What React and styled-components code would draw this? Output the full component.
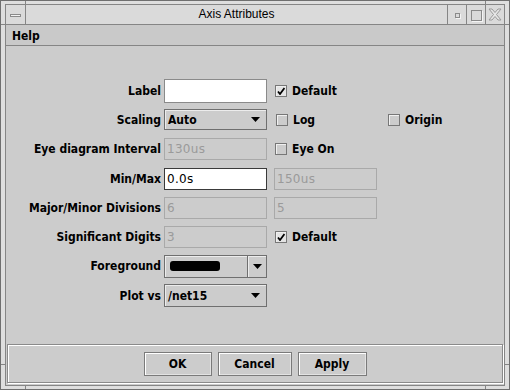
import React from 'react'
import styled, { createGlobalStyle } from 'styled-components'

const GlobalStyle = createGlobalStyle`
  html, body {
    margin: 0;
    padding: 0;
    background: #cccccc;
  }
  body {
    font-family: "DejaVu Sans Condensed", "DejaVu Sans", sans-serif;
  }
`

const Window = styled.div`
  position: relative;
  box-sizing: border-box;
  width: 510px;
  height: 390px;
  padding: 3px 4px;
  display: flex;
  background: #dedede;
  border: 1px solid #6f6f6f;
`

const Tick = styled.div`
  position: absolute;
  left: ${p => p.$x}px;
  top: ${p => p.$y}px;
  width: ${p => p.$w}px;
  height: ${p => p.$h}px;
  background: #858585;
`

const Frame = styled.div`
  flex: 1;
  min-width: 0;
  display: flex;
  flex-direction: column;
  border: 1px solid #858585;
  background: #cccccc;
`

const TitleBar = styled.div`
  display: flex;
  height: 19px;
  background: #dadada;
  border-bottom: 1px solid #858585;
`

const TitleButton = styled.div`
  flex: none;
  width: ${p => (p.$left ? 19 : 18)}px;
  display: flex;
  align-items: center;
  justify-content: center;
  border-left: ${p => (p.$left ? 'none' : '1px solid #858585')};
  border-right: ${p => (p.$left ? '1px solid #858585' : 'none')};
`

const Title = styled.div`
  flex: 1;
  text-align: center;
  font: 12px/19px "Liberation Sans", Arial, sans-serif;
  color: #000;
`

const MinBar = styled.div`
  width: 9px;
  height: 1px;
  margin-top: 1px;
  background: #f2f2f2;
  border: 1px solid #8a8a8a;
`

const IconSquare = styled.div`
  box-sizing: border-box;
  width: ${p => p.$size}px;
  height: ${p => p.$size}px;
  margin-top: 1px;
  border: 1px solid #8a8a8a;
  box-shadow: 1px 1px 0 #f4f4f4;
`

const MenuBar = styled.div`
  height: 20px;
  padding-left: 6px;
  background: #c9c9c9;
  border-bottom: 1px solid #858585;
  font-size: 12px;
  font-weight: bold;
  line-height: 22px;
  color: #000;
`

const Form = styled.div`
  flex: 1;
  display: grid;
  grid-template-columns: 155px 103px 114px auto;
  grid-template-rows: repeat(8, 29.3px);
  column-gap: 3px;
  align-content: start;
  align-items: center;
  padding-top: 30px;
`

const Label = styled.div`
  text-align: right;
  font-size: 12px;
  font-weight: bold;
  color: #000;
`

const fieldStates = {
  normal: { bg: '#ffffff', border: '#8a8a8a', color: '#000' },
  focus: { bg: '#ffffff', border: '#3a3a3a', color: '#000' },
  disabled: { bg: '#cccccc', border: '#a9a9a9', color: '#9a9a9a' },
}

const TextField = styled.div`
  box-sizing: border-box;
  width: 103px;
  height: ${p => p.$h || 22}px;
  margin-left: ${p => p.$offset || 0}px;
  padding: 0 2px;
  display: flex;
  align-items: center;
  background: ${p => fieldStates[p.$state || 'normal'].bg};
  border: 1px solid ${p => fieldStates[p.$state || 'normal'].border};
  color: ${p => fieldStates[p.$state || 'normal'].color};
  font-family: "DejaVu Sans", sans-serif;
  font-size: 12px;
  letter-spacing: 0.3px;
`

const Combo = styled.div`
  box-sizing: border-box;
  width: 103px;
  height: ${p => p.$h || 22}px;
  display: flex;
  align-items: center;
  justify-content: space-between;
  padding: 0 6px 0 3px;
  background: #cccccc;
  border: 1px solid #6f6f6f;
  box-shadow: inset 1px 1px 0 #ececec;
  font-size: 12px;
  font-weight: bold;
  color: #000;
`

const ColorCombo = styled.div`
  box-sizing: border-box;
  width: 103px;
  height: 23px;
  display: flex;
  background: #cccccc;
  border: 1px solid #6f6f6f;
  box-shadow: inset 1px 1px 0 #ececec;
`

const SwatchArea = styled.div`
  flex: 1;
  display: flex;
  align-items: center;
  padding-left: 5px;
`

const Swatch = styled.div`
  width: 50px;
  height: 10px;
  border-radius: 3px;
  background: ${p => p.$color};
`

const ArrowPart = styled.div`
  flex: none;
  width: 18px;
  display: flex;
  align-items: center;
  justify-content: center;
  border-left: 1px solid #6f6f6f;
  box-shadow: inset 1px 0 0 #ececec;
`

const CheckRow = styled.div`
  display: flex;
  align-items: center;
  gap: 5px;
  margin-left: ${p => p.$offset || 0}px;
  font-size: 12px;
  font-weight: bold;
  color: #000;
`

const Box = styled.div`
  box-sizing: border-box;
  width: 12px;
  height: 12px;
  display: flex;
  align-items: center;
  justify-content: center;
  border: 1px solid #777777;
  box-shadow: inset 1px 1px 0 #f0f0f0;
  background: ${p => (p.$checked ? '#e4e4e4' : '#cccccc')};
`

const ButtonPanel = styled.div`
  box-sizing: border-box;
  height: 39px;
  margin: 0 1px 2px 1px;
  display: flex;
  align-items: center;
  justify-content: center;
  gap: 6px;
  border: 1px solid #8a8a8a;
  box-shadow: inset 1px 1px 0 #ffffff, 1px 1px 0 #ffffff;
`

const Button = styled.button`
  box-sizing: border-box;
  width: ${p => p.$w}px;
  height: 24px;
  padding: 0;
  background: #cccccc;
  border: 1px solid #7a7a7a;
  box-shadow: inset 1px 1px 0 #ffffff, inset -1px -1px 0 #e2e2e2;
  font-family: "DejaVu Sans Condensed", "DejaVu Sans", sans-serif;
  font-size: 12px;
  font-weight: bold;
  color: #000;
`

const Arrow = () => (
  <svg width="9" height="5" viewBox="0 0 9 5">
    <polygon points="0,0 9,0 4.5,5" fill="#000" />
  </svg>
)

const CloseGlyph = () => (
  <svg width="14" height="13" viewBox="0 0 14 13">
    <path
      d="M1 1 L4 1 L7 4.5 L10 1 L13 1 L8.5 6.5 L13 12 L10 12 L7 8.5 L4 12 L1 12 L5.5 6.5 Z"
      fill="#e6e6e6"
      stroke="#9a9a9a"
      strokeWidth="1"
    />
  </svg>
)

const Check = ({ checked, children, offset }) => (
  <CheckRow $offset={offset}>
    <Box $checked={checked}>
      {checked && (
        <svg width="8" height="8" viewBox="0 0 8 8">
          <path d="M1 4.5 L3 7 L7.5 1" fill="none" stroke="#000" strokeWidth="1.8" />
        </svg>
      )}
    </Box>
    {children}
  </CheckRow>
)

const Empty = () => <div />

const App = () => (
  <>
    <GlobalStyle />
    <Window>
      <Tick $x={24} $y={0} $w={1} $h={3} />
      <Tick $x={484} $y={0} $w={1} $h={3} />
      <Tick $x={24} $y={385} $w={1} $h={3} />
      <Tick $x={484} $y={385} $w={1} $h={3} />
      <Tick $x={0} $y={23} $w={4} $h={1} />
      <Tick $x={0} $y={363} $w={4} $h={1} />
      <Tick $x={504} $y={23} $w={4} $h={1} />
      <Tick $x={504} $y={363} $w={4} $h={1} />

      <Frame>
        <TitleBar>
          <TitleButton $left>
            <MinBar />
          </TitleButton>
          <Title>Axis Attributes</Title>
          <TitleButton>
            <IconSquare $size={5} />
          </TitleButton>
          <TitleButton>
            <IconSquare $size={11} />
          </TitleButton>
          <TitleButton>
            <CloseGlyph />
          </TitleButton>
        </TitleBar>

        <MenuBar>Help</MenuBar>

        <Form>
          <Label>Label</Label>
          <TextField $h={24} />
          <Check checked offset={5}>Default</Check>
          <Empty />

          <Label>Scaling</Label>
          <Combo $h={21}>
            Auto
            <Arrow />
          </Combo>
          <Check offset={6}>Log</Check>
          <Check offset={1}>Origin</Check>

          <Label>Eye diagram Interval</Label>
          <TextField $state="disabled">130us</TextField>
          <Check offset={5}>Eye On</Check>
          <Empty />

          <Label>Min/Max</Label>
          <TextField $state="focus">0.0s</TextField>
          <TextField $state="disabled" $offset={4}>150us</TextField>
          <Empty />

          <Label>Major/Minor Divisions</Label>
          <TextField $state="disabled">6</TextField>
          <TextField $state="disabled" $offset={4}>5</TextField>
          <Empty />

          <Label>Significant Digits</Label>
          <TextField $state="disabled">3</TextField>
          <Check checked offset={5}>Default</Check>
          <Empty />

          <Label>Foreground</Label>
          <ColorCombo>
            <SwatchArea>
              <Swatch $color="#000000" />
            </SwatchArea>
            <ArrowPart>
              <Arrow />
            </ArrowPart>
          </ColorCombo>
          <Empty />
          <Empty />

          <Label>Plot vs</Label>
          <Combo $h={23}>
            /net15
            <Arrow />
          </Combo>
          <Empty />
          <Empty />
        </Form>

        <ButtonPanel>
          <Button $w={68}>OK</Button>
          <Button $w={74}>Cancel</Button>
          <Button $w={69}>Apply</Button>
        </ButtonPanel>
      </Frame>
    </Window>
  </>
)

export default App
